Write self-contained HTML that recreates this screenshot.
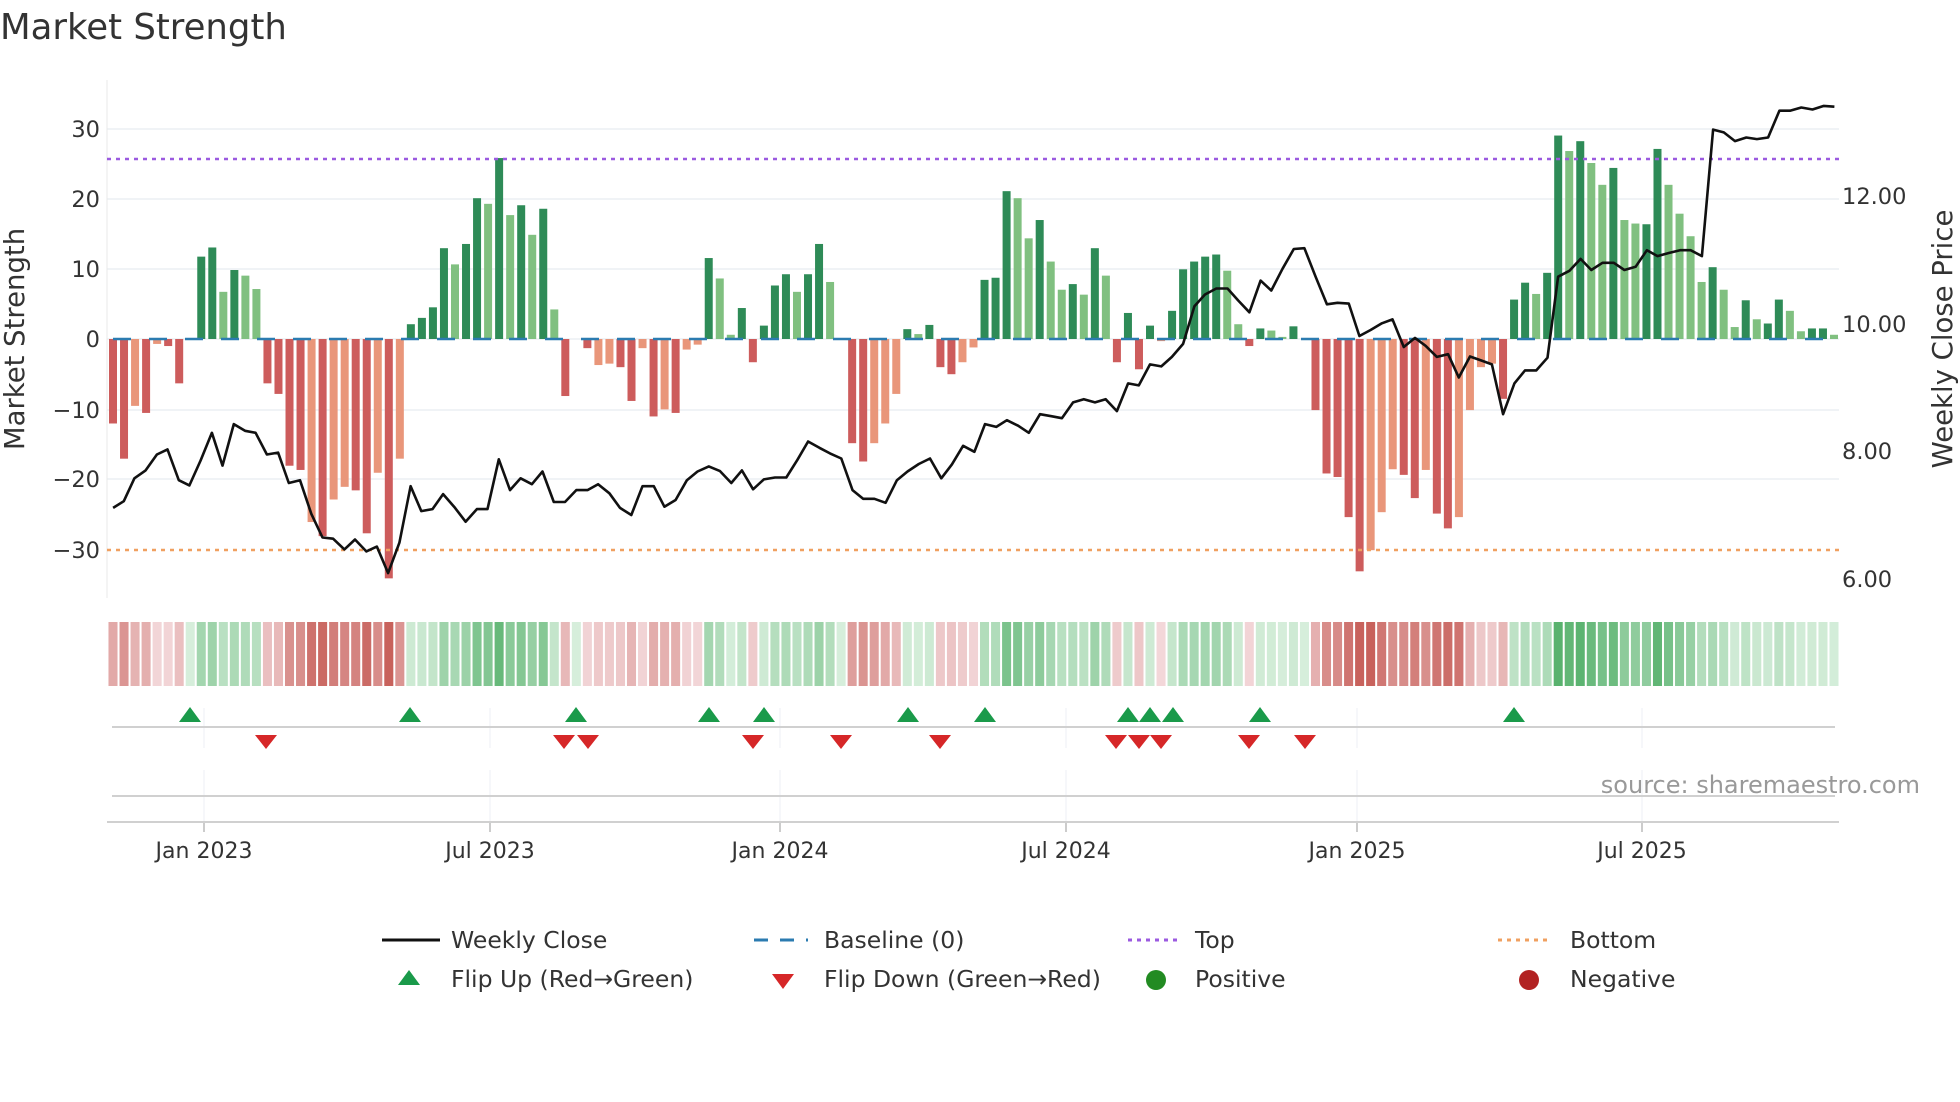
<!DOCTYPE html>
<html><head><meta charset="utf-8">
<style>
html,body{margin:0;padding:0;background:#fff;}
svg{display:block;font-family:"DejaVu Sans","Liberation Sans",sans-serif;}
</style></head>
<body>
<svg id="s" width="1960" height="1102" viewBox="0 0 1960 1102" xmlns="http://www.w3.org/2000/svg">
<rect width="1960" height="1102" fill="#fff"/>
<text x="0" y="39" font-size="35.5" fill="#333">Market Strength</text>
<g id="grid"></g>
<g id="bars"></g>
<g id="over"></g>
<g id="heat"></g>
<g id="marks"></g>
<g font-size="22.5" fill="#333" text-anchor="end">
<text x="100" y="137">30</text>
<text x="100" y="207">20</text>
<text x="100" y="277">10</text>
<text x="100" y="347">0</text>
<text x="100" y="418">−10</text>
<text x="100" y="487">−20</text>
<text x="100" y="558">−30</text>
</g>
<g font-size="22.5" fill="#333">
<text x="1842" y="204">12.00</text>
<text x="1842" y="332">10.00</text>
<text x="1842" y="459">8.00</text>
<text x="1842" y="587">6.00</text>
</g>
<text transform="translate(24,339) rotate(-90)" font-size="27.5" fill="#333" text-anchor="middle">Market Strength</text>
<text transform="translate(1952,339) rotate(-90)" font-size="27.5" fill="#333" text-anchor="middle">Weekly Close Price</text>
<g font-size="22" fill="#333" text-anchor="middle">
<text x="204" y="858">Jan 2023</text>
<text x="490" y="858">Jul 2023</text>
<text x="780" y="858">Jan 2024</text>
<text x="1066" y="858">Jul 2024</text>
<text x="1357" y="858">Jan 2025</text>
<text x="1642" y="858">Jul 2025</text>
</g>
<text x="1920" y="793" font-size="24" fill="#999" text-anchor="end">source: sharemaestro.com</text>
<g font-size="23.5" fill="#333">
<line x1="382" y1="940" x2="440" y2="940" stroke="#111" stroke-width="3"/>
<text x="451" y="948">Weekly Close</text>
<line x1="754" y1="940" x2="808" y2="940" stroke="#2b7bb0" stroke-width="3" stroke-dasharray="14 12"/>
<text x="824" y="948">Baseline (0)</text>
<line x1="1128" y1="940" x2="1182" y2="940" stroke="#9b5ae0" stroke-width="3" stroke-dasharray="4 5"/>
<text x="1195" y="948">Top</text>
<line x1="1498" y1="940" x2="1552" y2="940" stroke="#f0a060" stroke-width="3" stroke-dasharray="4 5"/>
<text x="1570" y="948">Bottom</text>
<polygon points="409,970 398,985 420,985" fill="#1a9a4a"/>
<text x="451" y="987">Flip Up (Red→Green)</text>
<polygon points="772,974 794,974 783,989" fill="#d62728"/>
<text x="824" y="987">Flip Down (Green→Red)</text>
<circle cx="1156" cy="980" r="10" fill="#228b22"/>
<text x="1195" y="987">Positive</text>
<circle cx="1529" cy="980" r="10" fill="#b22222"/>
<text x="1570" y="987">Negative</text>
</g>
</svg>
<script>
var NS="http://www.w3.org/2000/svg";
function el(p,t,a){var e=document.createElementNS(NS,t);for(var k in a)e.setAttribute(k,a[k]);p.appendChild(e);return e;}
var g=document.getElementById('grid'),b=document.getElementById('bars'),o=document.getElementById('over'),h=document.getElementById('heat'),m=document.getElementById('marks');
var Y0=339,U=7.04;
[129,199,269,410,479].forEach(function(y){el(g,'line',{x1:107,x2:1839,y1:y,y2:y,stroke:'#eceff4','stroke-width':1.5});});
el(g,'line',{x1:107,x2:1839,y1:339,y2:339,stroke:'#eceff4','stroke-width':1.5});
el(g,'line',{x1:107,x2:107,y1:80,y2:598,stroke:'#e8e8e8','stroke-width':1});
[204,490,780,1066,1357,1642].forEach(function(x){
 el(g,'line',{x1:x,x2:x,y1:708,y2:748,stroke:'#eceff4','stroke-width':1});
 el(g,'line',{x1:x,x2:x,y1:770,y2:822,stroke:'#eceff4','stroke-width':1});
 el(g,'line',{x1:x,x2:x,y1:822,y2:832,stroke:'#bbb','stroke-width':1.5});
});
var s1="-12R,-17R,-9.5S,-10.5R,-0.7S,-1R,-6.3R,0Z,11.7D,13D,6.7L,9.8D,9L,7.1L,-6.3R,-7.8R,-18R,-18.6R,-26S,-28R,-22.8S,-21S,-21.5R,-27.6R,-19S,-34R,-17S,2.1D,3D,4.5D,12.9D,10.6L,13.5D,20D,19.2L,25.7D,17.6L,19D,14.8L,18.5D,4.2L,-8.1R,0Z,-1.3R,-3.7S,-3.5S,-4R,-8.8R,-1.3S,-11R,-10S,-10.5R,-1.5S,-0.8S,11.5D,8.6L,0.6L,4.4D,-3.3R,1.9D,7.6D,9.2D,6.7L,9.2D,13.5D,8.1L,0Z,-14.8R,-17.4R,-14.8S,-12S,-7.8S,1.4D,0.7L,2D,-4R,-5R,-3.3S,-1.2S";
var s2="8.4D,8.7D,21D,20L,14.3L,16.9D,11L,7L,7.8D,6.3L,12.9D,9L,-3.3R,3.7D,-4.3R,1.9D,-0.3S,4D,9.9D,11D,11.7D,12D,9.7L,2.1L,-1R,1.5D,1.2L,0.3L,1.8D,0Z,-10.1R,-19.1R,-19.6R,-25.3R,-33R,-30S,-24.6S,-18.5S,-19.3R,-22.6R,-18.6S,-24.8R,-26.9R,-25.3S,-10.1S,-4S,-3.5S,-8.5R,5.6D,8D,6.4L,9.4D,28.9D,26.7L,28.1D,25L,21.9L,24.3D,16.9L,16.4L,16.3D,27D,21.9L,17.8L,14.6L,8.1L,10.2D,7L,1.7L,5.5D,2.8L,2.2D,5.6D,4L,1.1L,1.5D,1.5D,0.6L";
var arr=(s1+","+s2).split(",");
var N=arr.length,X0=113,ST=(1834-113)/(N-1);
var col={D:'#2e8b57',L:'#80c080',R:'#cd5c5c',S:'#e9967a',Z:'#80c080'};
function mix(a,c,t){return 'rgb('+[0,1,2].map(function(i){return Math.round(a[i]+(c[i]-a[i])*t);}).join(',')+')';}
arr.forEach(function(s,i){
 var t=s.slice(-1),v=parseFloat(s),x=X0+i*ST;
 if(v!==0){var y=Y0-v*U;el(b,'rect',{x:x-4,width:8,y:Math.min(y,Y0),height:Math.abs(v*U),fill:col[t]});}
 var k=Math.min(Math.abs(v)/30,1);
 var c=v>=0?mix([214,238,219],[84,176,106],k):mix([243,216,218],[200,98,92],k);
 el(h,'rect',{x:x-ST/2+1,width:ST-2,y:622,height:64,fill:c});
});
el(o,'line',{x1:113,x2:1839,y1:339,y2:339,stroke:'#2b7bb0','stroke-width':2.5,'stroke-dasharray':'18 18'});
el(o,'line',{x1:107,x2:1839,y1:159,y2:159,stroke:'#9b5ae0','stroke-width':2.5,'stroke-dasharray':'4 5'});
el(o,'line',{x1:107,x2:1839,y1:550,y2:550,stroke:'#f0a060','stroke-width':2.5,'stroke-dasharray':'4 5'});
var p1=[181,1285,198,1268,215,1210,233,1190,251,1150,268,1137,286,1215,303,1228,321,1165,339,1095,356,1178,374,1073,392,1090,409,1095,427,1150,445,1145,462,1222,480,1215,498,1300,516,1360,533,1363,551,1390,568,1365,586,1395,603,1383,621,1450,639,1373,657,1230,674,1293,692,1288,709,1250,727,1283,745,1320,763,1288,780,1288,798,1162,816,1240,833,1210,851,1225,868,1193,886,1270,904,1270,922,1240,940,1240,957,1225,975,1248,992,1285,1010,1303,1028,1230,1046,1230,1063,1282,1081,1265,1099,1215,1116,1193,1134,1180,1152,1192,1170,1222,1187,1190,1205,1238,1222,1213,1240,1208,1258,1208,1276,1163,1293,1117,1311,1133,1328,1147,1346,1160,1364,1240,1381,1262,1399,1262,1417,1272,1435,1215,1452,1193,1470,1174,1488,1160,1506,1210,1523,1175,1541,1128,1559,1143];
var p2=[8,1073,26,1080,43,1063,61,1077,78,1095,96,1048,114,1053,131,1058,149,1018,166,1010,184,1018,201,1010,219,1040,237,970,254,975,272,922,290,927,307,903,325,870,343,775,360,745,378,730,396,730,413,760,431,790,449,710,466,735,484,680,502,630,519,628,537,700,555,770,572,766,590,768,607,850,625,835,643,818,660,808,678,878,696,855,713,875,731,903,749,896,766,955,784,902,802,912,819,922,837,1048,855,970,872,937,890,937,908,905,925,700,943,685,961,655,978,683,996,665,1014,665,1031,683,1049,675,1067,633,1084,648,1102,640,1120,633,1137,633,1155,648,1173,328,1190,335,1208,357,1226,348,1243,352,1261,348,1279,280,1296,280,1314,272,1332,277,1350,268,1367,270];
var pts=[];
for(var i=0;i<p1.length;i+=2)pts.push((p1[i]/1.6).toFixed(1)+','+(p1[i+1]/2.53).toFixed(1));
for(var i=0;i<p2.length;i+=2)pts.push((980+p2[i]/1.6).toFixed(1)+','+(p2[i+1]/2.53).toFixed(1));
el(o,'polyline',{points:pts.join(' '),fill:'none',stroke:'#111','stroke-width':2.6,'stroke-linejoin':'round'});
el(m,'line',{x1:112,x2:1835,y1:727,y2:727,stroke:'#d0d0d0','stroke-width':2});
el(m,'line',{x1:112,x2:1835,y1:796,y2:796,stroke:'#d0d0d0','stroke-width':2});
el(m,'line',{x1:107,x2:1839,y1:822,y2:822,stroke:'#d0d0d0','stroke-width':2});
[190,410,576,709,764,908,985,1128,1150,1173,1260,1514].forEach(function(x){el(m,'polygon',{points:(x)+',707 '+(x-11)+',722 '+(x+11)+',722',fill:'#1a9a4a'});});
[266,564,588,753,841,940,1116,1139,1161,1249,1305].forEach(function(x){el(m,'polygon',{points:(x-11)+',735 '+(x+11)+',735 '+x+',749',fill:'#d62728'});});
</script>
</body></html>
